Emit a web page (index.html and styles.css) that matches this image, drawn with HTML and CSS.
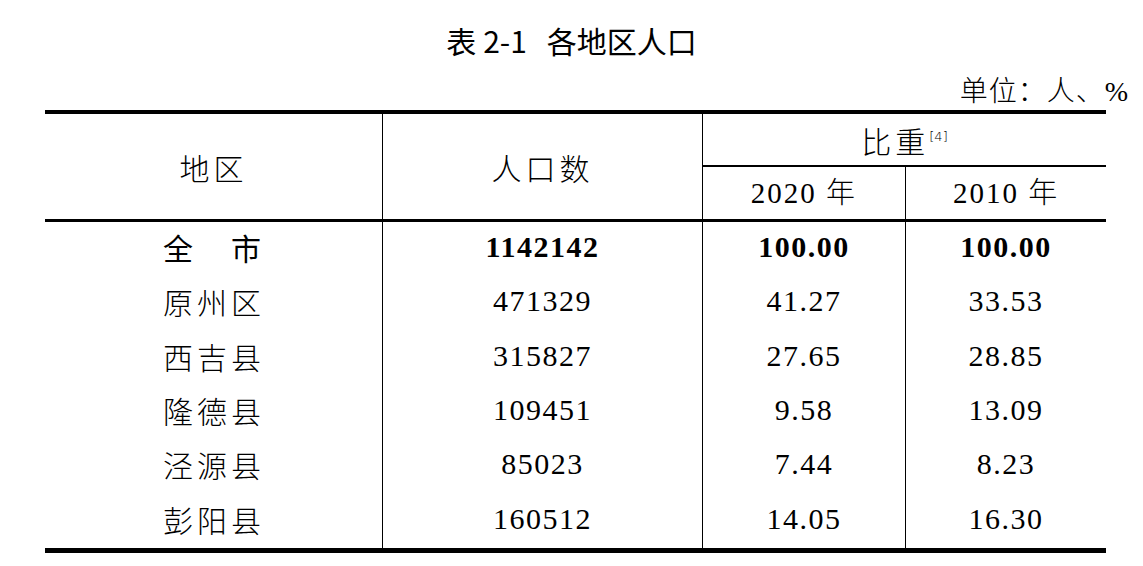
FILE: index.html
```html
<!DOCTYPE html>
<html lang="zh-CN">
<head>
<meta charset="utf-8">
<title>表 2-1 各地区人口</title>
<link rel="stylesheet" href="styles.css">
</head>
<body>
<div class="page">
  <h1 class="title">表<span class="title-no">2-1</span>各地区人口</h1>
  <div class="unit">单位：人、<span class="pct">%</span></div>
  <table class="data">
    <colgroup><col class="c1"><col class="c2"><col class="c3"><col class="c4"></colgroup>
    <thead>
      <tr class="h1">
        <th rowspan="2" class="region">地区</th>
        <th rowspan="2" class="pop">人口数</th>
        <th colspan="2" class="ratio">比重<sup class="note">[4]</sup></th>
      </tr>
      <tr class="h2">
        <th class="yr">2020 年</th>
        <th class="yr">2010 年</th>
      </tr>
    </thead>
    <tbody>
      <tr class="total"><td class="name">全　市</td><td>1142142</td><td>100.00</td><td>100.00</td></tr>
      <tr><td class="name">原州区</td><td>471329</td><td>41.27</td><td>33.53</td></tr>
      <tr><td class="name">西吉县</td><td>315827</td><td>27.65</td><td>28.85</td></tr>
      <tr><td class="name">隆德县</td><td>109451</td><td>9.58</td><td>13.09</td></tr>
      <tr><td class="name">泾源县</td><td>85023</td><td>7.44</td><td>8.23</td></tr>
      <tr><td class="name">彭阳县</td><td>160512</td><td>14.05</td><td>16.30</td></tr>
    </tbody>
  </table>
</div>
</body>
</html>
```
FILE: styles.css
```css
* { box-sizing: border-box; }
html, body { margin: 0; background: #fff; }
body {
  font-family: "Liberation Serif", "Noto Sans CJK SC", serif;
  color: #000;
}
.page { width: 1143px; }

.title {
  margin: 0;
  padding-top: 22px;
  height: 58px;
  line-height: 36px;
  text-align: center;
  font-family: "Noto Sans CJK SC", sans-serif;
  font-weight: 400;
  font-size: 30px;
}
.title-no { margin: 0 20px 0 7px; }

.unit {
  height: 52px;
  padding: 13px 15px 0 0;
  line-height: 36px;
  text-align: right;
  font-family: "Noto Sans CJK SC", sans-serif;
  font-weight: 300;
  font-size: 28px;
  letter-spacing: 1px;
}
.pct { font-family: "Liberation Serif", serif; letter-spacing: 0; }

.data {
  margin-left: 45px;
  width: 1061px;
  table-layout: fixed;
  border-collapse: separate;
  border-spacing: 0;
  border-top: 4px solid #000;
  border-bottom: 5px solid #000;
}
.c1 { width: 337px; }
.c2 { width: 320px; }
.c3 { width: 203px; }
.c4 { width: 201px; }

th, td {
  padding: 0;
  font-weight: 400;
  text-align: center;
  vertical-align: middle;
}
th {
  font-size: 30px;
  font-family: "Noto Sans CJK SC", sans-serif;
  font-weight: 300;
  letter-spacing: 4px;
  line-height: 36px;
}
.h1 { height: 53px; }
.h2 { height: 55px; }
.pop, .ratio, .yr { border-left: 1px solid #000; }
.region, .pop, .yr { border-bottom: 3px solid #000; }
.ratio { border-bottom: 2px solid #000; }
.note {
  font-family: "DejaVu Sans", sans-serif;
  font-size: 13px;
  letter-spacing: 0;
  vertical-align: top;
  position: relative;
  top: -3px;
  margin-left: 0;
}
.yr {
  font-family: "Liberation Serif", "Noto Sans CJK SC", serif;
  font-size: 29px;
  letter-spacing: 2px;
}

tbody tr { height: 54.33px; }
td {
  font-size: 30px;
  letter-spacing: 1.5px;
  line-height: 36px;
  padding-bottom: 4px;
}
td + td { border-left: 1px solid #000; }
td.name {
  text-align: left;
  padding-left: 118px;
  font-family: "Noto Sans CJK SC", sans-serif;
  font-weight: 300;
  letter-spacing: 4px;
}
.total td { font-weight: 700; }
.total td.name { font-weight: 400; }
```
